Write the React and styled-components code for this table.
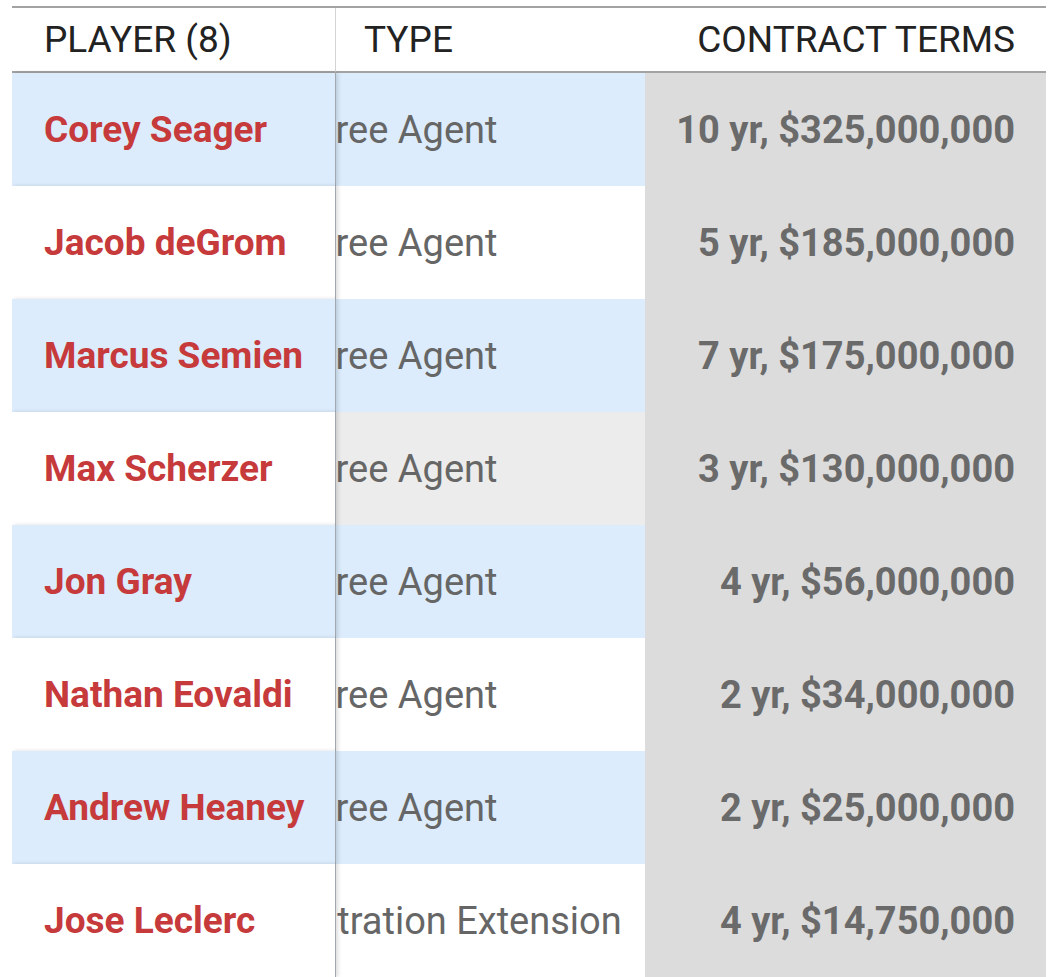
import React from 'react';
import styled, { createGlobalStyle } from 'styled-components';

const GlobalStyle = createGlobalStyle`
    html, body {
        margin: 0;
        padding: 0;
        background: #fff;
        font-family: Roboto, "Liberation Sans", sans-serif;
    }
`

const Table = styled.div`
    margin: 6px 7px 0 12px;
    border-top: 2px solid #a3a3a3;
    display: grid;
    grid-template-columns: 324px 309px 1fr;
    overflow: hidden;
`

const HeadCell = styled.div`
    height: 63px;
    display: flex;
    align-items: center;
    justify-content: ${props => props.right ? 'flex-end' : 'flex-start'};
    padding: ${props => props.right ? '0 31px 0 0' : props.first ? '0 0 0 32px' : '0 0 0 28px'};
    font-size: 37px;
    color: #222;
    background: #fff;
    border-bottom: 2px solid #a3a3a3;
    border-right: ${props => props.first ? '1px solid #d4d4d4' : '0'};
    white-space: nowrap;
`

const PlayerCell = styled.div`
    height: 113px;
    display: flex;
    align-items: center;
    padding-left: 32px;
    background: ${props => props.striped ? '#dcecfc' : '#fff'};
    border-right: 1px solid #a2a8b0;
    box-shadow: 2px 0 4px rgba(0, 0, 0, 0.14);
    position: relative;
    z-index: 1;
    font-size: 37px;
    font-weight: 700;
    color: #c63a3b;
    white-space: nowrap;
`

const TypeCell = styled.div`
    height: 113px;
    display: flex;
    align-items: center;
    overflow: hidden;
    background: ${props => props.striped ? '#dcecfc' : props.hover ? '#ececec' : '#fff'};
    font-size: 38px;
    color: #666;
    white-space: nowrap;
`

const TypeText = styled.span`
    margin-left: ${props => props.shift}px;
`

const TermsCell = styled.div`
    height: 113px;
    display: flex;
    align-items: center;
    justify-content: flex-end;
    padding-right: 31px;
    background: #dcdcdc;
    font-size: 38px;
    font-weight: 700;
    color: #6a6a6a;
    white-space: nowrap;
`

const players = [
    { name: 'Corey Seager', type: 'Free Agent', terms: '10 yr, $325,000,000' },
    { name: 'Jacob deGrom', type: 'Free Agent', terms: '5 yr, $185,000,000' },
    { name: 'Marcus Semien', type: 'Free Agent', terms: '7 yr, $175,000,000' },
    { name: 'Max Scherzer', type: 'Free Agent', terms: '3 yr, $130,000,000', hover: true },
    { name: 'Jon Gray', type: 'Free Agent', terms: '4 yr, $56,000,000' },
    { name: 'Nathan Eovaldi', type: 'Free Agent', terms: '2 yr, $34,000,000' },
    { name: 'Andrew Heaney', type: 'Free Agent', terms: '2 yr, $25,000,000' },
    { name: 'Jose Leclerc', type: 'Arbitration Extension', terms: '4 yr, $14,750,000' },
];

const shiftFor = type => type === 'Free Agent' ? -21 : -67;

const App = () => (
    <>
        <GlobalStyle />
        <Table>
            <HeadCell first>PLAYER ({players.length})</HeadCell>
            <HeadCell>TYPE</HeadCell>
            <HeadCell right>CONTRACT TERMS</HeadCell>
            {players.map((p, i) => (
                <React.Fragment key={p.name}>
                    <PlayerCell striped={i % 2 === 0}>{p.name}</PlayerCell>
                    <TypeCell striped={i % 2 === 0} hover={p.hover}>
                        <TypeText shift={shiftFor(p.type)}>{p.type}</TypeText>
                    </TypeCell>
                    <TermsCell>{p.terms}</TermsCell>
                </React.Fragment>
            ))}
        </Table>
    </>
);

export default App;
